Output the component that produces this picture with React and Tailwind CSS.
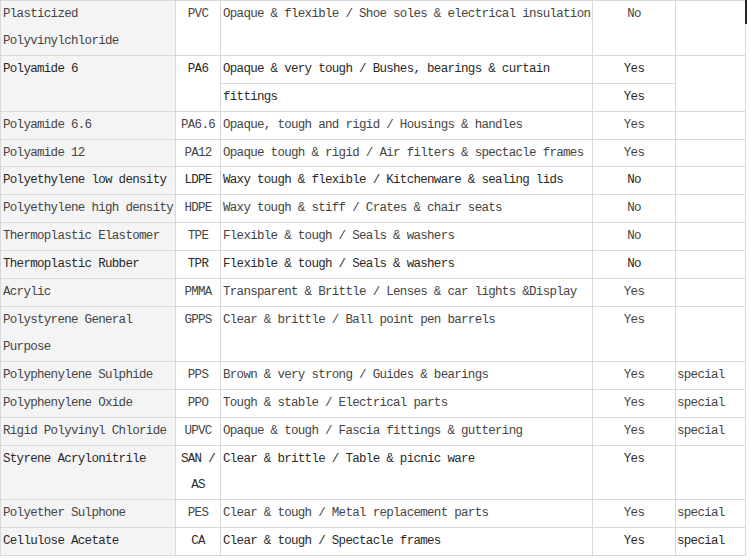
const rows = [
  { name: "Plasticized Polyvinylchloride", abbr: "PVC", desc: "Opaque & flexible / Shoe soles & electrical insulation", use: "No" },
  { name: "Polyamide 6", abbr: "PA6", desc: "Opaque & very tough / Bushes, bearings & curtain", use: "Yes", dark: true, sub: { desc: "fittings", use: "Yes" } },
  { name: "Polyamide 6.6", abbr: "PA6.6", desc: "Opaque, tough and rigid / Housings & handles", use: "Yes" },
  { name: "Polyamide 12", abbr: "PA12", desc: "Opaque tough & rigid / Air filters & spectacle frames", use: "Yes" },
  { name: "Polyethylene low density", abbr: "LDPE", desc: "Waxy tough & flexible / Kitchenware & sealing lids", use: "No", dark: true },
  { name: "Polyethylene high density", abbr: "HDPE", desc: "Waxy tough & stiff / Crates & chair seats", use: "No" },
  { name: "Thermoplastic Elastomer", abbr: "TPE", desc: "Flexible & tough / Seals & washers", use: "No" },
  { name: "Thermoplastic Rubber", abbr: "TPR", desc: "Flexible & tough / Seals & washers", use: "No", dark: true },
  { name: "Acrylic", abbr: "PMMA", desc: "Transparent & Brittle / Lenses & car lights &Display", use: "Yes" },
  { name: "Polystyrene General Purpose", abbr: "GPPS", desc: "Clear & brittle / Ball point pen barrels", use: "Yes" },
  { name: "Polyphenylene Sulphide", abbr: "PPS", desc: "Brown & very strong / Guides & bearings", use: "Yes", note: "special" },
  { name: "Polyphenylene Oxide", abbr: "PPO", desc: "Tough & stable / Electrical parts", use: "Yes", note: "special" },
  { name: "Rigid Polyvinyl Chloride", abbr: "UPVC", desc: "Opaque & tough / Fascia fittings & guttering", use: "Yes", note: "special" },
  { name: "Styrene Acrylonitrile", abbr: "SAN / AS", desc: "Clear & brittle / Table & picnic ware", use: "Yes", dark: true },
  { name: "Polyether Sulphone", abbr: "PES", desc: "Clear & tough / Metal replacement parts", use: "Yes", note: "special" },
  { name: "Cellulose Acetate", abbr: "CA", desc: "Clear & tough / Spectacle frames", use: "Yes", note: "special", dark: true },
];

const cell = "border border-[#d9d9d9] align-top leading-[26.9px] p-0";

export default function App() {
  return (
    <div className="relative w-[750px] h-[560px] bg-white overflow-hidden">
      <table
        className="table-fixed border-collapse w-[745px] text-[12.5px] tracking-[-0.7px] text-[#454545]"
        style={{ fontFamily: '"Liberation Mono", "DejaVu Sans Mono", monospace' }}
      >
        <colgroup>
          <col className="w-[175px]" />
          <col className="w-[45px]" />
          <col className="w-[372px]" />
          <col className="w-[83px]" />
          <col className="w-[70px]" />
        </colgroup>
        <tbody>
          {rows.map((r) => {
            const tone = r.dark ? "text-[#2a2a2a]" : "";
            const span = r.sub ? 2 : 1;
            const main = (
              <tr key={r.name}>
                <td rowSpan={span} className={`${cell} ${tone} bg-[#f4f4f4] pl-[2px]`}>{r.name}</td>
                <td rowSpan={span} className={`${cell} ${tone} text-center`}>{r.abbr}</td>
                <td className={`${cell} ${tone} pl-[2px] whitespace-nowrap`}>{r.desc}</td>
                <td className={`${cell} ${tone} text-center`}>{r.use}</td>
                <td rowSpan={span} className={`${cell} ${tone} pl-[1px]`}>{r.note || ""}</td>
              </tr>
            );
            if (!r.sub) return main;
            return [
              main,
              <tr key={r.name + "-sub"}>
                <td className={`${cell} ${tone} pl-[2px]`}>{r.sub.desc}</td>
                <td className={`${cell} ${tone} text-center`}>{r.sub.use}</td>
              </tr>,
            ];
          })}
        </tbody>
      </table>
      <span className="absolute left-[745px] top-0 w-[2px] h-[24px] bg-[#222]" />
    </div>
  );
}
